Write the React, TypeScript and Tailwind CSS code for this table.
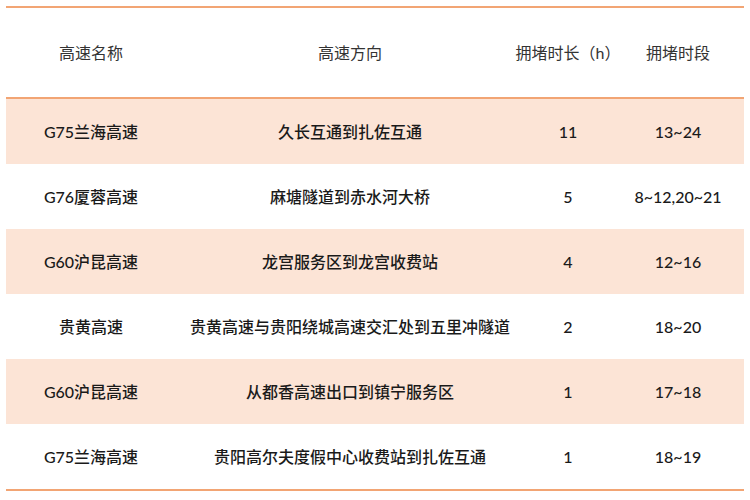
import React from "react";

const rows = [
  ["G75兰海高速", "久长互通到扎佐互通", "11", "13~24"],
  ["G76厦蓉高速", "麻塘隧道到赤水河大桥", "5", "8~12,20~21"],
  ["G60沪昆高速", "龙宫服务区到龙宫收费站", "4", "12~16"],
  ["贵黄高速", "贵黄高速与贵阳绕城高速交汇处到五里冲隧道", "2", "18~20"],
  ["G60沪昆高速", "从都香高速出口到镇宁服务区", "1", "17~18"],
  ["G75兰海高速", "贵阳高尔夫度假中心收费站到扎佐互通", "1", "18~19"],
];

export default function App() {
  return (
    <div
      className="w-[750px] h-[500px] bg-white pt-[6px] pl-[6px]"
      style={{ fontFamily: '"Lato", "Noto Sans CJK SC", sans-serif' }}
    >
      <div className="w-[738px] border-t-2 border-b-2 border-[#f2a574]">
        <div className="grid grid-cols-[170px_348px_88px_132px] h-[91px] items-center text-[16px] text-[#333] border-b-2 border-[#f2a574] whitespace-nowrap">
          <div className="text-center">高速名称</div>
          <div className="text-center">高速方向</div>
          <div className="flex justify-center">拥堵时长（h）</div>
          <div className="text-center">拥堵时段</div>
        </div>
        {rows.map((r, i) => (
          <div
            key={i}
            className={`grid grid-cols-[170px_348px_88px_132px] h-[65px] items-center text-[16px] font-medium text-[#1a1a1a] whitespace-nowrap ${
              i % 2 === 0 ? "bg-[#fce4d6]" : "bg-white"
            }`}
          >
            <div className="text-center">{r[0]}</div>
            <div className="text-center">{r[1]}</div>
            <div className="text-center">{r[2]}</div>
            <div className="text-center">{r[3]}</div>
          </div>
        ))}
      </div>
    </div>
  );
}
